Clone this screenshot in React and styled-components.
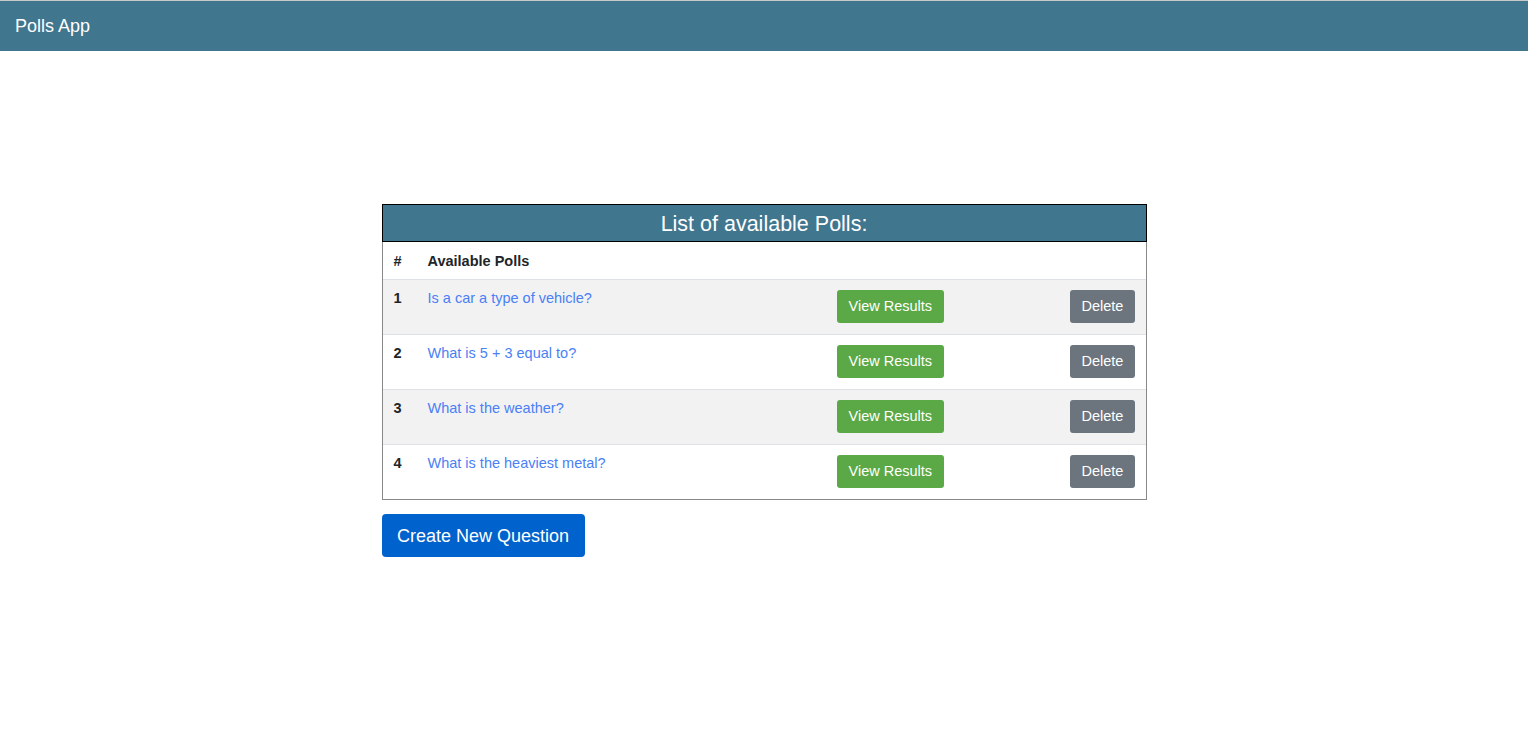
import React from "react";
import styled, { createGlobalStyle } from "styled-components";

const GlobalStyle = createGlobalStyle`
  body {
    margin: 0;
    font-family: "Liberation Sans", Arial, sans-serif;
    background: #fff;
    color: #212529;
  }
`;

const NavBar = styled.div`
  height: 50px;
  border-top: 1px solid #c9c9c9;
  background: #41768f;
  display: flex;
  align-items: center;
  padding: 0 15px;
`;

const Brand = styled.div`
  color: #fff;
  font-size: 18px;
  line-height: 20px;
`;

const Main = styled.div`
  width: 765px;
  margin: 153px auto 0;
  box-sizing: border-box;
`;

const Caption = styled.div`
  box-sizing: border-box;
  height: 38px;
  padding-top: 2px;
  background: #41768f;
  border: 1px solid #000;
  color: #fff;
  font-size: 21.5px;
  line-height: 34px;
  text-align: center;
`;

const Table = styled.div`
  border: 1px solid #888;
  border-top: none;
`;

const Row = styled.div`
  display: grid;
  grid-template-columns: 37px 409px 233px 1fr;
  background: ${p => (p.$striped ? "#f2f2f2" : "#fff")};
  border-top: ${p => (p.$first ? "none" : "1px solid #dee2e6")};
  font-size: 14.5px;
  line-height: 21px;
`;

const Cell = styled.div`
  padding: ${p => (p.$head ? "9px 8px 7px" : "8px 8px")};
  font-weight: ${p => (p.$bold ? 700 : 400)};
  &:first-child {
    padding-left: 11px;
  }
  &:last-child {
    padding-right: 11px;
  }
`;

const PollLink = styled.a`
  color: #4a7ff5;
  text-decoration: none;
  cursor: pointer;
`;

const Button = styled.button`
  display: block;
  margin-left: ${p => (p.$right ? "auto" : "0")};
  font-family: inherit;
  font-size: 14.5px;
  line-height: 20px;
  height: 33px;
  padding: 0 12px 2px;
  margin-top: 2px;
  margin-bottom: 3px;
  border: none;
  border-radius: 3px;
  color: #fff;
  background: ${p => p.$bg};
  cursor: pointer;
`;

const CreateButton = styled.button`
  margin-top: 14px;
  font-family: inherit;
  font-size: 18px;
  line-height: 24px;
  height: 43px;
  padding: 0 15.5px;
  border: none;
  border-radius: 4px;
  background: #0062cc;
  color: #fff;
  cursor: pointer;
`;

const polls = [
  "Is a car a type of vehicle?",
  "What is 5 + 3 equal to?",
  "What is the weather?",
  "What is the heaviest metal?",
];

export default function App() {
  return (
    <>
      <GlobalStyle />
      <NavBar>
        <Brand>Polls App</Brand>
      </NavBar>
      <Main>
        <Caption>List of available Polls:</Caption>
        <Table>
          <Row $first>
            <Cell $bold $head>#</Cell>
            <Cell $bold $head>Available Polls</Cell>
            <Cell $head />
            <Cell $head />
          </Row>
          {polls.map((q, i) => (
            <Row key={q} $striped={i % 2 === 0}>
              <Cell $bold>{i + 1}</Cell>
              <Cell>
                <PollLink>{q}</PollLink>
              </Cell>
              <Cell>
                <Button $bg="#5aa946">View Results</Button>
              </Cell>
              <Cell>
                <Button $bg="#6c757d" $right>Delete</Button>
              </Cell>
            </Row>
          ))}
        </Table>
        <CreateButton>Create New Question</CreateButton>
      </Main>
    </>
  );
}
